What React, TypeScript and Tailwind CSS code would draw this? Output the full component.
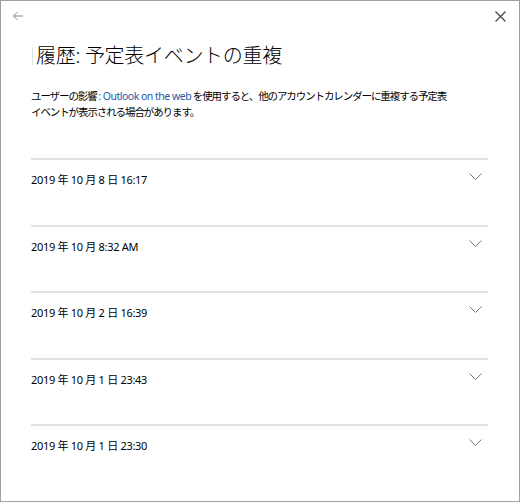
import React from "react";

const rows = [
  "2019 年 10 月 8 日 16:17",
  "2019 年 10 月 8:32 AM",
  "2019 年 10 月 2 日 16:39",
  "2019 年 10 月 1 日 23:43",
  "2019 年 10 月 1 日 23:30",
];

const font = {
  fontFamily: '"Segoe UI", "Noto Sans", "Noto Sans CJK JP", sans-serif',
};

export default function App() {
  return (
    <div
      className="w-[520px] h-[502px] border border-[#a0a0a0] bg-white flex flex-col text-black"
      style={font}
    >
      <div className="h-[30px] flex items-start justify-between pl-[11px] pr-[13px] pt-[9px]">
        <svg width="12" height="12" viewBox="0 0 12 12" fill="none">
          <path d="M11 6H1.5M5.5 2L1.5 6L5.5 10" stroke="#8a8a8a" strokeWidth="1" />
        </svg>
        <svg width="11" height="11" viewBox="0 0 11 11" fill="none" className="mt-[1px]">
          <path d="M0.5 0.5L10.5 10.5M10.5 0.5L0.5 10.5" stroke="#444" strokeWidth="1.2" />
        </svg>
      </div>
      <div className="mt-[10px] pl-[31px] flex items-center h-[30px]">
        <span className="w-[1px] h-[18px] bg-[#e0e0e0] mr-[3px]" />
        <span className="text-[20px] leading-[30px] font-light tracking-[-0.3px]">
          履歴: 予定表イベントの重複
        </span>
      </div>
      <div className="mt-[17px] pl-[30px] text-[10.5px] leading-[16px] whitespace-nowrap tracking-[-1.1px]">
        ユーザーの影響 <span className="text-[#1e5aa8] tracking-[-0.5px]">: Outlook on the web</span> を使用すると、他のアカウントカレンダーに重複する予定表
        <br />
        イベントが表示される場合があります。
      </div>
      <div className="mt-[38px] ml-[30px] w-[457px] flex flex-col">
        {rows.map((r, i) => (
          <div key={i} className="flex flex-col">
            <div className="h-[2px] bg-[#e3e3e3]" />
            <div
              className={
                "flex items-start justify-between pt-[12px] " +
                (i % 2 === 0 ? "h-[65px]" : "h-[64px]")
              }
            >
              <span className="text-[11px] leading-[16px] tracking-[-0.3px]">{r}</span>
              <svg width="13" height="7" viewBox="0 0 13 7" fill="none" className="mr-[6px] mt-[1px]">
                <path d="M0.5 0.5L6.5 6.5L12.5 0.5" stroke="#7a7a7a" strokeWidth="1" />
              </svg>
            </div>
          </div>
        ))}
      </div>
    </div>
  );
}
